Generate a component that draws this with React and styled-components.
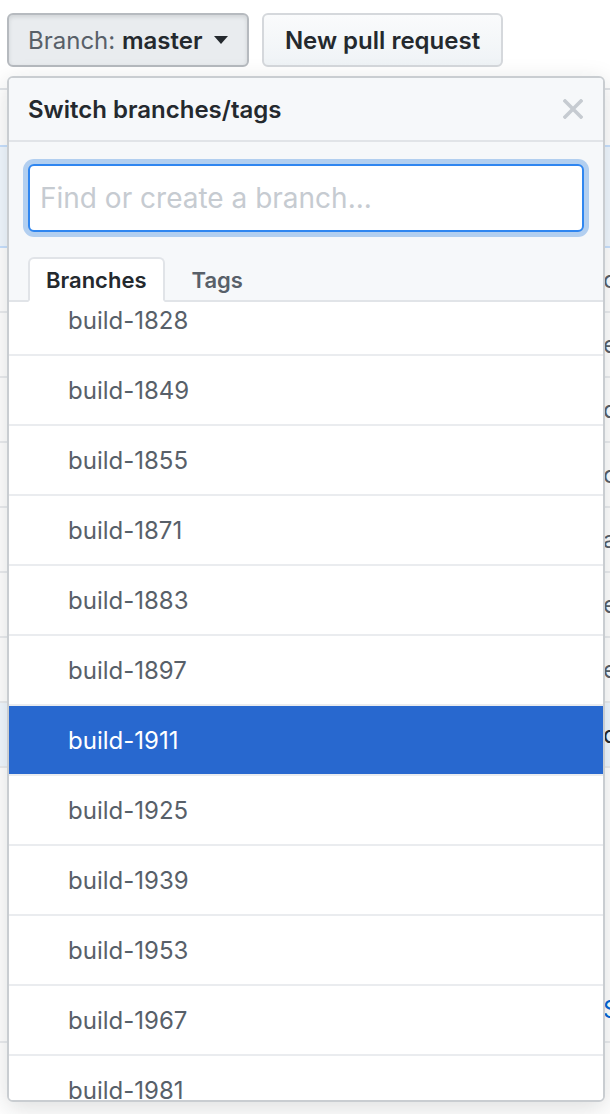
import { useLayoutEffect, useRef } from "react";
import styled, { createGlobalStyle } from "styled-components";

const GlobalStyle = createGlobalStyle`
  html, body {
    margin: 0;
    padding: 0;
    background: #fff;
    overflow: hidden;
  }
  body {
    font-family: Inter, "Noto Sans", "Liberation Sans", sans-serif;
    -webkit-font-smoothing: antialiased;
  }
  * {
    box-sizing: border-box;
  }
`;

const Page = styled.div`
  position: relative;
  width: 610px;
  height: 1114px;
  overflow: hidden;
`;

const Toolbar = styled.div`
  display: flex;
  gap: 13px;
  padding: 13px 0 0 7px;
`;

const Button = styled.button`
  height: 54px;
  width: ${(p) => p.$width}px;
  padding: 0 19px;
  display: flex;
  align-items: center;
  justify-content: ${(p) => (p.$pressed ? "flex-start" : "center")};
  gap: 9px;
  font-family: inherit;
  font-size: 24px;
  font-weight: 600;
  color: #24292e;
  border-radius: 6px;
  border: 2px solid ${(p) => (p.$pressed ? "#b6babf" : "#d5d8dc")};
  background: ${(p) =>
    p.$pressed ? "#e9ecef" : "linear-gradient(#fafbfc, #eff3f6)"};
  box-shadow: ${(p) =>
    p.$pressed ? "inset 0 2px 4px rgba(27, 31, 35, 0.12)" : "none"};
`;

const Muted = styled.span`
  font-weight: 400;
  color: #586069;
`;

const Caret = styled.span`
  width: 0;
  height: 0;
  margin-left: 2px;
  border-top: 8px solid #24292e;
  border-left: 7px solid transparent;
  border-right: 7px solid transparent;
`;

/* page content sitting behind the dropdown */
const Behind = styled.div`
  margin-top: 21px;
  border-top: 2px solid #e1e4e8;
`;

const CommitTease = styled.div`
  height: 103px;
  margin-top: 55px;
  background: #f1f8ff;
  border-top: 2px solid #c8e1ff;
  border-bottom: 2px solid #c8e1ff;
`;

const FileRow = styled.div`
  height: 65px;
  display: flex;
  align-items: center;
  padding-left: 603px;
  border-bottom: 2px solid #eaecef;
  font-size: 24px;
  color: ${(p) => p.$color || "#586069"};
  background: ${(p) => p.$bg || "transparent"};
  white-space: nowrap;
  &:first-child {
    margin-top: 9px;
  }
`;

const Spacer = styled.div`
  height: ${(p) => p.$h}px;
`;

const Panel = styled.div`
  position: absolute;
  left: 7px;
  top: 76px;
  width: 598px;
  height: 1026px;
  display: flex;
  flex-direction: column;
  background: #fff;
  border: 2px solid #c9cdd1;
  border-radius: 6px;
  box-shadow: 0 6px 24px rgba(27, 31, 35, 0.15);
  overflow: hidden;
`;

const Header = styled.div`
  height: 64px;
  flex-shrink: 0;
  display: flex;
  align-items: center;
  justify-content: space-between;
  padding: 0 20px 0 19px;
  background: #f6f8fa;
  border-bottom: 2px solid #e1e4e8;
`;

const Title = styled.span`
  font-size: 24px;
  font-weight: 600;
  color: #24292e;
`;

const Close = styled.svg`
  width: 20px;
  height: 20px;
  display: block;
`;

const Filters = styled.div`
  flex-shrink: 0;
  padding: 22px 19px 0;
  background: #f6f8fa;
`;

const Input = styled.input`
  display: block;
  width: 100%;
  height: 68px;
  padding: 0 10px;
  font-family: inherit;
  font-size: 28px;
  color: #24292e;
  background: #fff;
  border: 2px solid #2f86f0;
  border-radius: 6px;
  outline: none;
  box-shadow: 0 0 0 5px rgba(3, 102, 214, 0.28);
  &::placeholder {
    color: #c6cbd1;
  }
`;

const Tabs = styled.div`
  display: flex;
  align-items: flex-end;
  gap: 9px;
  margin: 25px -19px 0;
  padding-left: 19px;
  height: 45px;
  border-bottom: 2px solid #e1e4e8;
`;

const Tab = styled.div`
  height: 45px;
  margin-bottom: -2px;
  padding: 0 16px;
  display: flex;
  align-items: center;
  font-size: 22px;
  font-weight: 600;
  color: ${(p) => (p.$active ? "#24292e" : "#586069")};
  background: ${(p) => (p.$active ? "#fff" : "transparent")};
  border: 2px solid ${(p) => (p.$active ? "#e1e4e8" : "transparent")};
  border-bottom-color: ${(p) => (p.$active ? "#fff" : "transparent")};
  border-radius: 6px 6px 0 0;
`;

const List = styled.div`
  flex: 1;
  overflow: hidden;
`;

const Item = styled.div`
  height: 70px;
  display: flex;
  align-items: center;
  padding-left: 59px;
  font-size: 24px;
  color: ${(p) => (p.$selected ? "#fff" : "#586069")};
  background: ${(p) => (p.$selected ? "#2868cf" : "#fff")};
  border-bottom: 2px solid #eaecef;
`;

const branches = [
  "build-1828",
  "build-1849",
  "build-1855",
  "build-1871",
  "build-1883",
  "build-1897",
  "build-1911",
  "build-1925",
  "build-1939",
  "build-1953",
  "build-1967",
  "build-1981",
  "build-1995",
];

const behindRows = ["outline", "eslint", "docs", "config", "add", "edit", "examples"];

export default function App() {
  const listRef = useRef(null);

  useLayoutEffect(() => {
    if (listRef.current) listRef.current.scrollTop = 16;
  }, []);

  return (
    <>
      <GlobalStyle />
      <Page>
        <Toolbar>
          <Button $pressed $width={242}>
            <span>
              <Muted>Branch: </Muted>master
            </span>
            <Caret />
          </Button>
          <Button $width={241}>New pull request</Button>
        </Toolbar>

        <Behind>
          <CommitTease />
          {behindRows.map((r) => (
            <FileRow key={r}>{r}</FileRow>
          ))}
          <FileRow $bg="#f1f8ff" $color="#24292e">
            dist
          </FileRow>
          <Spacer $h={210} />
          <FileRow $color="#0366d6">Show</FileRow>
        </Behind>

        <Panel>
          <Header>
            <Title>Switch branches/tags</Title>
            <Close viewBox="0 0 20 20">
              <path
                d="M2 2 L18 18 M18 2 L2 18"
                stroke="#c6cbd1"
                strokeWidth="3.6"
                strokeLinecap="square"
              />
            </Close>
          </Header>
          <Filters>
            <Input placeholder="Find or create a branch..." />
            <Tabs>
              <Tab $active>Branches</Tab>
              <Tab>Tags</Tab>
            </Tabs>
          </Filters>
          <List ref={listRef}>
            {branches.map((b) => (
              <Item key={b} $selected={b === "build-1911"}>
                {b}
              </Item>
            ))}
          </List>
        </Panel>
      </Page>
    </>
  );
}
